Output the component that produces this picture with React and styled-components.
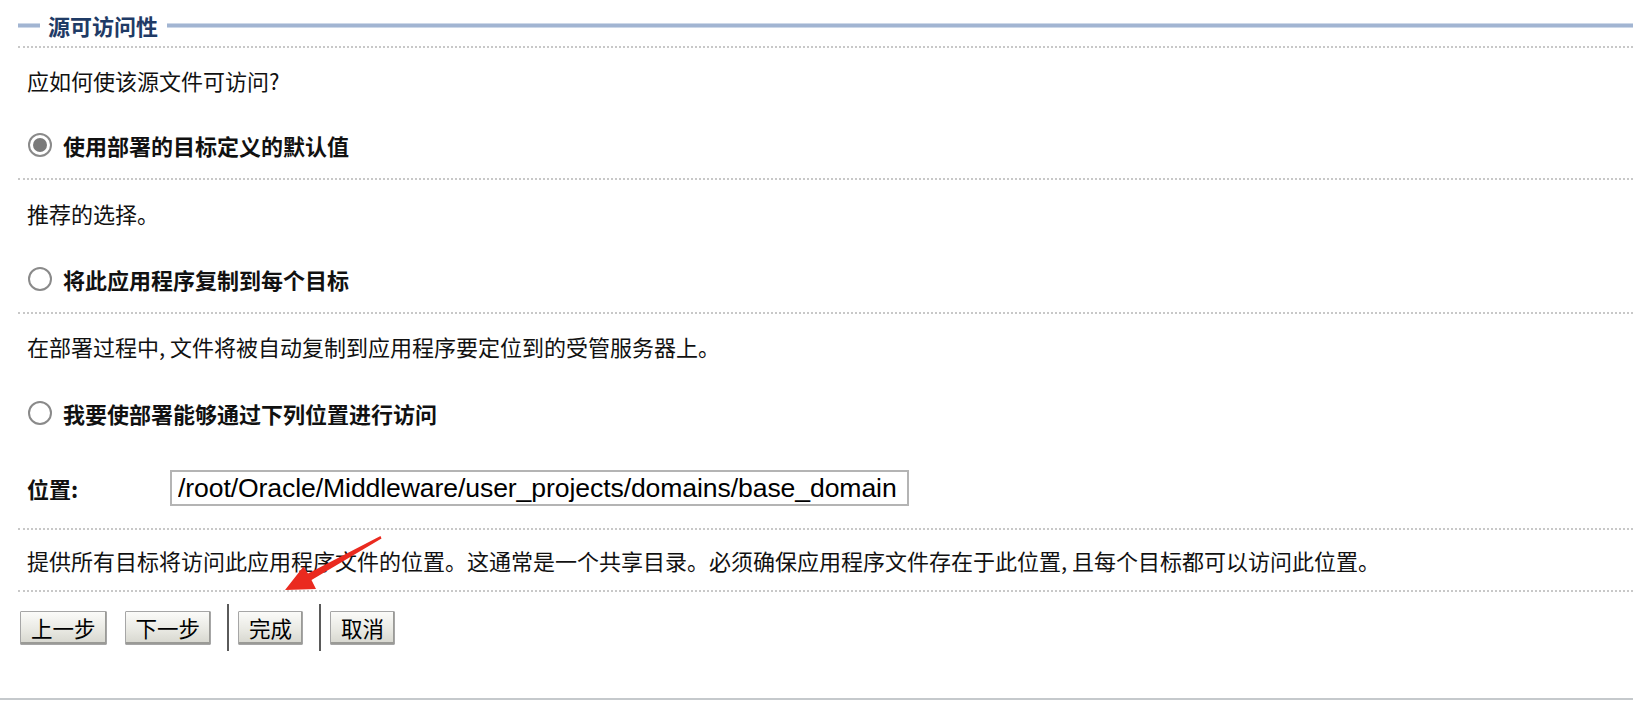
import React from 'react';
import styled, { createGlobalStyle } from 'styled-components';

const GlobalStyle = createGlobalStyle`
  html, body {
    margin: 0;
    padding: 0;
    background: #fff;
  }
  body {
    font-family: "Noto Sans CJK SC", "Liberation Sans", sans-serif;
    color: #111;
  }
`;

const Page = styled.div`
  position: relative;
  width: 1633px;
  height: 701px;
  overflow: hidden;
`;

const Panel = styled.div`
  padding-left: 18px;
  height: 698px;
  border-bottom: 2px solid #c5c9cc;
`;

const Header = styled.div`
  display: flex;
  align-items: center;
  height: 42px;
  padding-top: 4px;
  border-bottom: 2px dotted #c8c8c8;
`;

const Rule = styled.span`
  height: 5px;
  flex: ${(p) => (p.$grow ? '1 1 auto' : '0 0 22px')};
  background: linear-gradient(#e2e9f3, #a2b5d2 30%, #a2b5d2 70%, #e2e9f3);
`;

const Title = styled.h2`
  margin: 0 9px 0 8px;
  font-size: 22px;
  line-height: 1;
  font-weight: bold;
  color: #1f3b66;
`;

const Section = styled.div`
  border-bottom: 2px dotted #c8c8c8;
`;

const TextRow = styled.div`
  display: flex;
  align-items: center;
  height: ${(p) => p.$h}px;
  padding-left: 9px;
  font-size: 22px;
`;

const RadioRow = styled.label`
  display: flex;
  align-items: center;
  gap: 11px;
  height: ${(p) => p.$h}px;
  padding-left: 10px;
  font-size: 22px;
  font-weight: bold;
`;

const Radio = styled.input.attrs({ type: 'radio' })`
  appearance: none;
  flex: none;
  margin: 0;
  width: 24px;
  height: 24px;
  border: 2px solid #8a8a8a;
  border-radius: 50%;
  box-sizing: border-box;
  display: grid;
  place-items: center;
  background: #fff;

  &::after {
    content: '';
    width: 14px;
    height: 14px;
    border-radius: 50%;
    background: ${(p) => (p.checked ? '#7a7a7a' : 'transparent')};
  }
`;

const FieldRow = styled.div`
  display: flex;
  align-items: center;
  height: 80px;
  padding-left: 9px;
`;

const FieldLabel = styled.span`
  width: 143px;
  font-size: 22px;
  font-weight: bold;
`;

const PathInput = styled.input`
  width: 739px;
  height: 36px;
  box-sizing: border-box;
  border: 2px solid #b4b4b4;
  padding: 0 0 0 6px;
  font-family: "Liberation Sans", Arial, sans-serif;
  font-size: 26.6px;
  letter-spacing: -0.1px;
  color: #000;
  outline: none;
`;

const Footer = styled.div`
  display: flex;
  align-items: center;
  height: 47px;
  padding: 12px 0 0 2px;
  gap: 9px;
`;

const ButtonGroup = styled.div`
  display: flex;
  gap: 18px;
  margin-right: 7px;
`;

const Button = styled.button`
  height: 34px;
  padding: 0 10px;
  font-family: "Noto Sans CJK SC", sans-serif;
  font-size: 21.5px;
  color: #000;
  background: linear-gradient(#fbfbf9, #e9e9e3 55%, #d6d6ce);
  border: 1px solid #a6a6a6;
  box-shadow: inset -1px -2px 0 #9a9a96;
  border-radius: 1px;
  line-height: 1;
`;

const Divider = styled.span`
  width: 2px;
  height: 47px;
  background: #5a5a5a;
  margin-left: ${(p) => p.$left}px;
`;

const Arrow = styled.svg`
  position: absolute;
  left: 0;
  top: 0;
  pointer-events: none;
`;

export default function App() {
  return (
    <Page>
      <GlobalStyle />
      <Panel>
        <Header>
          <Rule />
          <Title>源可访问性</Title>
          <Rule $grow />
        </Header>

        <Section>
          <TextRow $h={64}>应如何使该源文件可访问?</TextRow>
          <RadioRow $h={66}>
            <Radio name="mode" defaultChecked checked readOnly />
            使用部署的目标定义的默认值
          </RadioRow>
        </Section>

        <Section>
          <TextRow $h={66}>推荐的选择。</TextRow>
          <RadioRow $h={66}>
            <Radio name="mode" checked={false} readOnly />
            将此应用程序复制到每个目标
          </RadioRow>
        </Section>

        <Section>
          <TextRow $h={64}>在部署过程中, 文件将被自动复制到应用程序要定位到的受管服务器上。</TextRow>
          <RadioRow $h={70}>
            <Radio name="mode" checked={false} readOnly />
            我要使部署能够通过下列位置进行访问
          </RadioRow>
          <FieldRow>
            <FieldLabel>位置:</FieldLabel>
            <PathInput defaultValue="/root/Oracle/Middleware/user_projects/domains/base_domain" />
          </FieldRow>
        </Section>

        <Section>
          <TextRow $h={60}>
            提供所有目标将访问此应用程序文件的位置。这通常是一个共享目录。必须确保应用程序文件存在于此位置, 且每个目标都可以访问此位置。
          </TextRow>
        </Section>

        <Footer>
          <ButtonGroup>
            <Button>上一步</Button>
            <Button>下一步</Button>
          </ButtonGroup>
          <Divider $left={0} />
          <Button>完成</Button>
          <Divider $left={7} />
          <Button>取消</Button>
        </Footer>
      </Panel>

      <Arrow width="1633" height="701" viewBox="0 0 1633 701">
        <polygon
          fill="#ea2a1f"
          points="380.5,536 308,573.5 303.5,566.5 285,590 316,589 311.5,580 381.5,538.5"
        />
      </Arrow>
    </Page>
  );
}
